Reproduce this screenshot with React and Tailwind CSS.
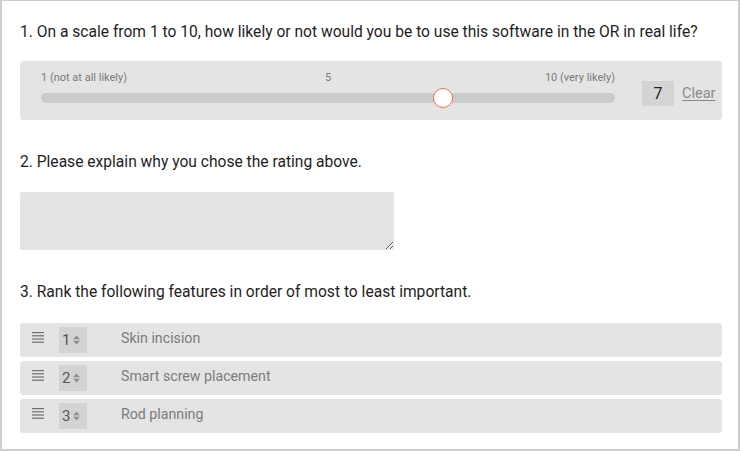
import React from "react";

function Caret() {
  return (
    <svg width="7" height="10" viewBox="0 0 7 10" className="shrink-0">
      <path d="M0 4.2 L3.5 0.4 L7 4.2 Z" fill="#8f8f8f" />
      <path d="M0 5.8 L3.5 9.6 L7 5.8 Z" fill="#8f8f8f" />
    </svg>
  );
}

function Burger() {
  return (
    <svg width="12" height="11" viewBox="0 0 12 11" className="shrink-0">
      {[0.6, 3.8, 7.0, 10.2].map((y) => (
        <line key={y} x1="0" x2="12" y1={y} y2={y} stroke="#6f6f6f" strokeWidth="1.2" />
      ))}
    </svg>
  );
}

function Row({ n, label }) {
  return (
    <div className="flex h-[34px] items-center rounded-[3px] bg-[#e4e4e4] pl-[12px]">
      <div className="mt-[-5px]">
        <Burger />
      </div>
      <div className="ml-[15px] flex h-[26px] w-[28px] items-center gap-[3px] bg-[#d3d3d3] pl-[3px] text-[15px] text-[#555]">
        <span>{n}</span>
        <Caret />
      </div>
      <span className="mb-[3px] ml-[34px] text-[14.2px] text-[#7b7b7b]">{label}</span>
    </div>
  );
}

export default function App() {
  return (
    <div
      className="box-border h-[451px] w-[740px] border-t border-r-2 border-b-2 border-l-2 border-[#cfcfcf] bg-white pl-[18px] pr-[16px] text-[#1e1e1e]"
      style={{ fontFamily: "Roboto, 'Noto Sans', Arial, sans-serif" }}
    >
      <div className="pt-[19px] text-[15.6px] leading-[24px]">
        1. On a scale from 1 to 10, how likely or not would you be to use this software in the OR in real life?
      </div>

      <div className="mt-[17px] flex h-[59px] rounded-[3px] bg-[#e4e4e4]">
        <div className="ml-[21px] w-[574px] pt-[10px]">
          <div className="relative h-[14px] text-[11px] leading-[14px] text-[#7a7a7a]">
            <span className="absolute left-0 top-0">1 (not at all likely)</span>
            <span className="absolute left-[284px] top-0">5</span>
            <span className="absolute right-0 top-0">10 (very likely)</span>
          </div>
          <div className="relative mt-[8px] h-[10px] rounded-full bg-[#cbcbcb]">
            <div className="absolute left-[392px] top-[-5px] h-[20px] w-[20px] rounded-full border-[1.5px] border-[#e8744f] bg-white" />
          </div>
        </div>
        <div className="ml-[27px] mt-[20px] flex h-[25px] w-[32px] items-center justify-center bg-[#d4d4d4] text-[16px] text-[#222]">
          7
        </div>
        <span className="ml-[8px] mt-[23px] text-[14.5px] leading-[20px] text-[#8a8a8a] underline underline-offset-2">
          Clear
        </span>
      </div>

      <div className="mt-[30px] text-[15.6px] leading-[24px]">2. Please explain why you chose the rating above.</div>

      <textarea className="mt-[18px] block h-[58px] w-[374px] rounded-[2px] bg-[#e4e4e4] outline-none" />

      <div className="mt-[30px] text-[15.6px] leading-[24px]">3. Rank the following features in order of most to least important.</div>

      <div className="mt-[19px] flex flex-col gap-[4px]">
        <Row n="1" label="Skin incision" />
        <Row n="2" label="Smart screw placement" />
        <Row n="3" label="Rod planning" />
      </div>
    </div>
  );
}
